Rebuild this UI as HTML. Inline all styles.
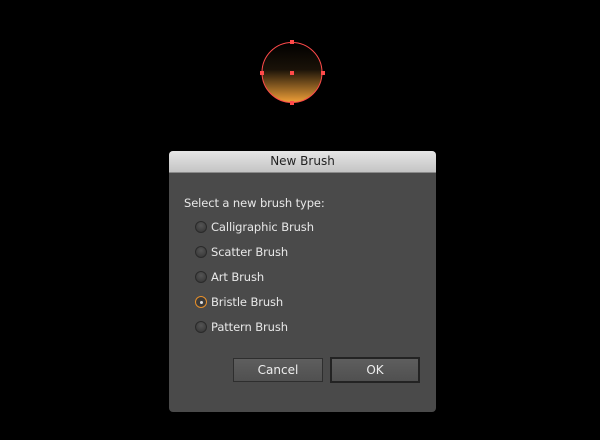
<!DOCTYPE html>
<html><head><style>
body{margin:0;width:600px;height:440px;background:#000;position:relative;overflow:hidden;font-family:"DejaVu Sans","Liberation Sans",sans-serif;}
.dlg{position:absolute;left:169px;top:151px;width:267px;height:261px;background:#4a4a4a;border-radius:4px;overflow:hidden;}
.tb{height:21px;background:linear-gradient(#e6e6e6,#c4c4c4);border-bottom:1px solid #8a8a8a;text-align:center;font-size:12px;line-height:21px;color:#222;}
.t{position:absolute;color:#e8e8e8;font-size:11.5px;letter-spacing:-0.1px;}
.r{position:absolute;left:26px;width:10px;height:10px;border-radius:50%;background:radial-gradient(circle at 50% 35%,#555,#333);border:1px solid #2a2a2a;}
.b{position:absolute;background:linear-gradient(#5e5e5e,#505050);color:#eee;font-size:12px;text-align:center;box-sizing:border-box;}
</style></head><body>
<svg width="600" height="440" style="position:absolute;left:0;top:0">
<defs><linearGradient id="g" x1="0" y1="0" x2="0" y2="1"><stop offset="0" stop-color="#000"/><stop offset="0.45" stop-color="#1a1208"/><stop offset="1" stop-color="#f0a038"/></linearGradient></defs>
<circle cx="292" cy="72.5" r="30" fill="url(#g)" stroke="#ff4a4a" stroke-width="1"/>
<g fill="#ff4a4a"><rect x="290" y="40" width="4" height="4"/><rect x="290" y="101" width="4" height="4"/><rect x="260" y="71" width="4" height="4"/><rect x="321" y="71" width="4" height="4"/><rect x="290" y="71" width="4" height="4"/></g>
</svg>
<div class="dlg">
<div class="tb">New Brush</div>
<div class="t" style="left:15px;top:45px">Select a new brush type:</div>
<div class="r" style="top:70px"></div><div class="t" style="left:42px;top:69px">Calligraphic Brush</div>
<div class="r" style="top:95px"></div><div class="t" style="left:42px;top:94px">Scatter Brush</div>
<div class="r" style="top:120px"></div><div class="t" style="left:42px;top:119px">Art Brush</div>
<div class="r" style="top:145px;border-color:#e8902a;background:#3a3a3a"><div style="position:absolute;left:3.5px;top:3.5px;width:3px;height:3px;border-radius:50%;background:#ddd"></div></div><div class="t" style="left:42px;top:144px">Bristle Brush</div>
<div class="r" style="top:170px"></div><div class="t" style="left:42px;top:169px">Pattern Brush</div>
<div class="b" style="left:64px;top:207px;width:90px;height:24px;line-height:22px;border:1px solid #2e2e2e">Cancel</div>
<div class="b" style="left:161px;top:206px;width:90px;height:26px;line-height:22px;border:2px solid #232323">OK</div>
</div>
</body></html>
